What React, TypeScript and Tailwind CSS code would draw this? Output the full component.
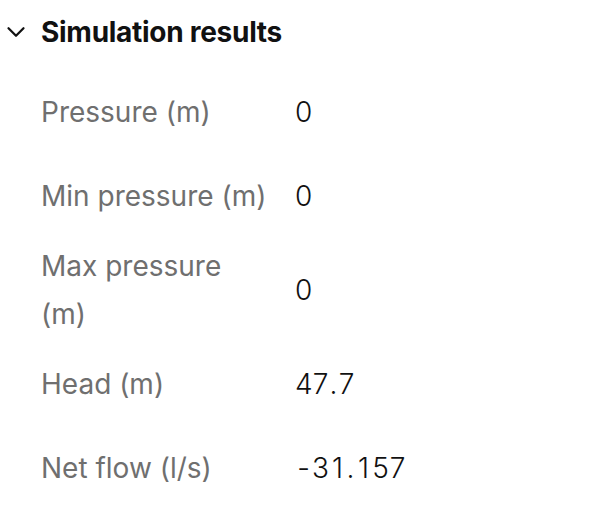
import { ChevronDown } from "lucide-react";

type Row = { label: string; value: string };

const rows: Row[] = [
    { label: "Pressure (m)", value: "0" },
    { label: "Min pressure (m)", value: "0" },
    { label: "Max pressure (m)", value: "0" },
    { label: "Head (m)", value: "47.7" },
    { label: "Net flow (l/s)", value: "-31.157" },
];

// numbers are shown with fixed-width digits, the decimal point stays narrow
function Mono({ text }: { text: string }) {
    return (
        <span className="inline-flex">
            {text.split("").map((ch, i) =>
                ch === "." ? (
                    <span key={i} className="inline-block w-[9px] text-center">
                        {ch}
                    </span>
                ) : (
                    <span key={i} className="inline-block w-[17px] text-center">
                        {ch}
                    </span>
                )
            )}
        </span>
    );
}

export default function App() {
    return (
        <div className="w-[590px] h-[520px] bg-white text-[#111] overflow-hidden" style={{ fontFamily: "Inter, 'Noto Sans', sans-serif" }}>
            <button className="flex items-center h-[64px]">
                <span className="w-[31px] flex justify-center">
                    <ChevronDown className="w-[30px] h-[30px] text-[#111]" strokeWidth={1.8} />
                </span>
                <span className="pl-[10px] text-[28px] font-bold tracking-[-0.01em]">Simulation results</span>
            </button>
            <div className="pl-[41px] pt-[6px]">
                {rows.map((row) => (
                    <div key={row.label} className="grid grid-cols-[255px_1fr] items-center min-h-[84px] py-[4px]">
                        <span className="text-[28px] leading-[48px] text-[#6f6f6f] pr-[28px]">{row.label}</span>
                        <span className="text-[28px] leading-[48px] font-light text-[#111] -ml-[1px]">
                            <Mono text={row.value} />
                        </span>
                    </div>
                ))}
            </div>
        </div>
    );
}
